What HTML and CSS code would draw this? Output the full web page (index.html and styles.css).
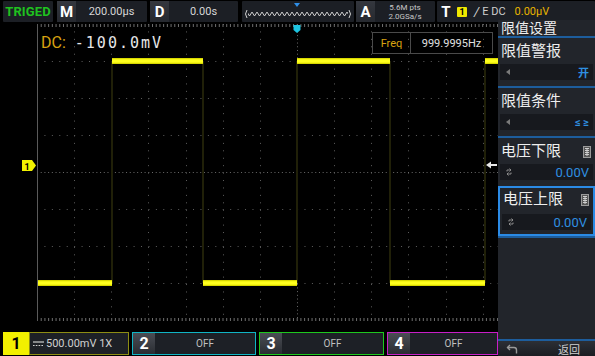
FILE: index.html
```html
<!DOCTYPE html>
<html>
<head>
<meta charset="utf-8">
<link rel="stylesheet" href="styles.css">
</head>
<body>
<div class="screen">
  <header class="topbar">
    <div class="box trig">TRIGED</div>
    <div class="box tb m"><span class="key">M</span><span class="val">200.00µs</span></div>
    <div class="box tb d"><span class="key">D</span><span class="val">0.00s</span></div>
    <div class="box wave">
      <svg width="112" height="21" viewBox="0 0 112 21">
        <defs>
          <pattern id="zz" x="0" y="0" width="5" height="21" patternUnits="userSpaceOnUse">
            <polyline points="0,11 2.5,15 5,11" fill="none" stroke="#cfcfcf" stroke-width="1"/>
          </pattern>
        </defs>
        <rect x="6" y="9" width="100" height="8" fill="url(#zz)"/>
        <path d="M5 9 Q2 13 5 17" fill="none" stroke="#cfcfcf" stroke-width="1"/>
        <path d="M107 9 Q110 13 107 17" fill="none" stroke="#cfcfcf" stroke-width="1"/>
        <polygon points="52,2 58,2 55,6" fill="#2f8fe8"/>
      </svg>
    </div>
    <div class="box acq"><span class="key">A</span><span class="acqtxt"><span>5.6M pts</span><span>2.0GSa/s</span></span></div>
    <div class="box trigset"><span class="key">T</span><span class="chbadge">1</span><span class="slope">/</span><span class="cpl">E DC</span><span class="lvl">0.00µV</span></div>
  </header>
  <div class="main">
    <div class="left">
      <div class="scope">
        <svg class="grid" width="498" height="310" viewBox="0 0 498 310">
          <g stroke="#5e5e5e" stroke-width="1" stroke-dasharray="1 6.43">
            <line x1="37" y1="39.5" x2="498" y2="39.5"/>
            <line x1="37" y1="76.5" x2="498" y2="76.5"/>
            <line x1="37" y1="113.5" x2="498" y2="113.5"/>
            <line x1="37" y1="187.5" x2="498" y2="187.5"/>
            <line x1="37" y1="224.5" x2="498" y2="224.5"/>
            <line x1="37" y1="261.5" x2="498" y2="261.5"/>
            <line x1="74.5" y1="2" x2="74.5" y2="298"/>
            <line x1="111.5" y1="2" x2="111.5" y2="298"/>
            <line x1="148.5" y1="2" x2="148.5" y2="298"/>
            <line x1="186.5" y1="2" x2="186.5" y2="298"/>
            <line x1="223.5" y1="2" x2="223.5" y2="298"/>
            <line x1="260.5" y1="2" x2="260.5" y2="298"/>
            <line x1="334.5" y1="2" x2="334.5" y2="298"/>
            <line x1="371.5" y1="2" x2="371.5" y2="298"/>
            <line x1="408.5" y1="2" x2="408.5" y2="298"/>
            <line x1="446.5" y1="2" x2="446.5" y2="298"/>
            <line x1="483.5" y1="2" x2="483.5" y2="298"/>
          </g>
          <g stroke="#6a6a6a" stroke-width="1" stroke-dasharray="1 2.71">
            <line x1="37" y1="150.5" x2="498" y2="150.5"/>
            <line x1="297.5" y1="2" x2="297.5" y2="298"/>
          </g>
          <g stroke="#6f6f6f" stroke-width="3" stroke-dasharray="1 2.71">
            <line x1="37" y1="3.5" x2="498" y2="3.5"/>
            <line x1="37" y1="297.5" x2="498" y2="297.5"/>
          </g>
          <line x1="37.5" y1="2" x2="37.5" y2="299" stroke="#5a5a5a" stroke-width="1"/>
          <g stroke="#202008" stroke-width="2">
            <line x1="112" y1="39" x2="112" y2="261"/>
            <line x1="203" y1="39" x2="203" y2="261"/>
            <line x1="297" y1="39" x2="297" y2="261"/>
            <line x1="390" y1="39" x2="390" y2="261"/>
            <line x1="485" y1="39" x2="485" y2="261"/>
          </g>
          <g fill="none" stroke="#d8d800" stroke-width="6">
            <line x1="38" y1="261" x2="112" y2="261"/>
            <line x1="203" y1="261" x2="297" y2="261"/>
            <line x1="390" y1="261" x2="485" y2="261"/>
            <line x1="112" y1="39" x2="203" y2="39"/>
            <line x1="297" y1="39" x2="390" y2="39"/>
            <line x1="485" y1="39" x2="498" y2="39"/>
          </g>
          <g fill="none" stroke="#ffff1e" stroke-width="3.5">
            <line x1="38" y1="261" x2="112" y2="261"/>
            <line x1="203" y1="261" x2="297" y2="261"/>
            <line x1="390" y1="261" x2="485" y2="261"/>
            <line x1="112" y1="39" x2="203" y2="39"/>
            <line x1="297" y1="39" x2="390" y2="39"/>
            <line x1="485" y1="39" x2="498" y2="39"/>
          </g>
          <polygon points="22,138 32,138 36,143.5 32,149 22,149" fill="#f2f200"/>
          <text x="27" y="147.5" class="chmark">1</text>
          <polygon points="486,143 491,139.5 491,146.5" fill="#e8e8e8"/>
          <rect x="490" y="142" width="7" height="2" fill="#e8e8e8"/>
          <polygon points="293.5,3 300.5,3 300.5,8 297,11 293.5,8" fill="#1cc4e0"/>
        </svg>
        <div class="readout"><span class="dc">DC:</span><span class="dcval">-100.0mV</span></div>
        <div class="freq"><span class="fl">Freq</span><span class="fv">999.9995Hz</span></div>
      </div>
      <div class="chbar">
        <div class="ch ch1"><span class="ckey">1</span><span class="cbody"><svg width="11" height="6" viewBox="0 0 11 6"><line x1="0" y1="1" x2="11" y2="1" stroke="#cfcfcf" stroke-width="1.2"/><line x1="0" y1="4.5" x2="11" y2="4.5" stroke="#cfcfcf" stroke-width="1.2" stroke-dasharray="1.6 1.2"/></svg>500.00mV 1X</span></div>
        <div class="ch ch2"><span class="ckey">2</span><span class="off">OFF</span></div>
        <div class="ch ch3"><span class="ckey">3</span><span class="off">OFF</span></div>
        <div class="ch ch4"><span class="ckey">4</span><span class="off">OFF</span></div>
      </div>
    </div>
    <aside class="menu">
      <div class="mtitle">限值设置</div>
      <div class="mitem">
        <div class="mlabel">限值警报</div>
        <div class="msub"><span class="larr"></span><span class="mval small">开</span></div>
      </div>
      <div class="mitem">
        <div class="mlabel">限值条件</div>
        <div class="msub"><span class="larr"></span><span class="mval small">≤ ≥</span></div>
      </div>
      <div class="mitem">
        <div class="mlabel"><span>电压下限</span><svg class="kbd" width="8" height="12" viewBox="0 0 8 12"><rect x="0.5" y="0.5" width="7" height="11" fill="#555" stroke="#9a9a9a"/><g stroke="#cfcfcf" stroke-width="1"><line x1="2" y1="2.5" x2="6" y2="2.5"/><line x1="2" y1="4.5" x2="6" y2="4.5"/><line x1="2" y1="6.5" x2="6" y2="6.5"/><line x1="2" y1="8.5" x2="6" y2="8.5"/><line x1="4" y1="2" x2="4" y2="10"/></g></svg></div>
        <div class="msub"><svg class="cyc" width="6" height="8" viewBox="0 0 6 8"><path d="M1 3.5 V2 H5 M3.5 0.5 L5 2 L3.5 3.5" fill="none" stroke="#8a8a8a" stroke-width="1"/><path d="M5 4.5 V6 H1 M2.5 4.5 L1 6 L2.5 7.5" fill="none" stroke="#8a8a8a" stroke-width="1"/></svg><span class="mval">0.00V</span></div>
      </div>
      <div class="mitem sel">
        <div class="mlabel"><span>电压上限</span><svg class="kbd" width="8" height="12" viewBox="0 0 8 12"><rect x="0.5" y="0.5" width="7" height="11" fill="#555" stroke="#9a9a9a"/><g stroke="#cfcfcf" stroke-width="1"><line x1="2" y1="2.5" x2="6" y2="2.5"/><line x1="2" y1="4.5" x2="6" y2="4.5"/><line x1="2" y1="6.5" x2="6" y2="6.5"/><line x1="2" y1="8.5" x2="6" y2="8.5"/><line x1="4" y1="2" x2="4" y2="10"/></g></svg></div>
        <div class="msub"><svg class="cyc" width="6" height="8" viewBox="0 0 6 8"><path d="M1 3.5 V2 H5 M3.5 0.5 L5 2 L3.5 3.5" fill="none" stroke="#8a8a8a" stroke-width="1"/><path d="M5 4.5 V6 H1 M2.5 4.5 L1 6 L2.5 7.5" fill="none" stroke="#8a8a8a" stroke-width="1"/></svg><span class="mval">0.00V</span></div>
      </div>
      <div class="mspacer"></div>
      <div class="mfoot">
        <svg width="12" height="10" viewBox="0 0 12 10"><path d="M1.5 3.5 H8 Q10.5 3.5 10.5 6 V9.5" fill="none" stroke="#9a9a9a" stroke-width="1.4"/><path d="M4 1 L1.5 3.5 L4 6" fill="none" stroke="#9a9a9a" stroke-width="1.4"/></svg>
        <span class="back">返回</span>
      </div>
    </aside>
  </div>
</div>
</body>
</html>
```

FILE: styles.css
```css
* { box-sizing: border-box; margin: 0; padding: 0; }
html, body { width: 595px; height: 356px; background: #000; overflow: hidden; }
body { font-family: Roboto, "Liberation Sans", "Noto Sans CJK SC", sans-serif; color: #d8d8d8; }

.screen { width: 595px; height: 356px; display: flex; flex-direction: column; }

/* top bar */
.topbar { height: 22px; display: flex; padding: 1px 0 0 3px; flex: none; }
.box { height: 21px; background: #1c1f25; display: flex; align-items: center; border-radius: 1px; }
.trig { width: 50px; justify-content: center; color: #1fc21f; font-weight: 700; font-size: 13px; letter-spacing: 0.1px; }
.key { width: 19px; height: 21px; background: linear-gradient(#34373e, #26292f); color: #fff; font-weight: 700; font-size: 15px; display: flex; align-items: center; justify-content: center; flex: none; }
.tb .val { flex: 1; text-align: center; font-size: 11px; color: #d6d6d6; }
.m { width: 90px; margin-left: 4px; }
.d { width: 88px; margin-left: 3px; }
.wave { width: 112px; margin-left: 4px; }
.wave svg { display: block; }
.acq { width: 79px; margin-left: 2px; }
.acqtxt { flex: 1; display: flex; flex-direction: column; align-items: center; font-size: 8px; line-height: 9px; color: #c8c8c8; }
.trigset { flex: 1; margin-left: 2px; background: #1c1f25; }
.trigset .key { width: 18px; background: none; }
.chbadge { width: 10px; height: 10px; background: #f0e800; color: #000; font-size: 9px; font-weight: 700; display: flex; align-items: center; justify-content: center; margin-left: 2px; border-radius: 1px; }
.slope { font-size: 13px; color: #cfcfcf; margin-left: 7px; font-style: italic; }
.cpl { font-size: 11px; color: #cfcfcf; margin-left: 3px; }
.lvl { font-size: 11px; color: #e8b400; margin-left: 9px; }

/* main */
.main { flex: 1; display: flex; }
.left { width: 498px; display: flex; flex-direction: column; }
.scope { height: 310px; position: relative; }
.grid { display: block; }
.chmark { font-family: Roboto, "Liberation Sans", sans-serif; font-size: 9px; font-weight: 700; fill: #000; text-anchor: middle; }
.readout { position: absolute; left: 41px; top: 12px; font-size: 16px; line-height: 18px; display: flex; }
.dc { color: #d8a310; }
.dcval { color: #e6e6e6; margin-left: 9px; letter-spacing: 2px; font-family: "DejaVu Sans Mono", monospace; font-size: 15px; }
.freq { position: absolute; left: 372px; top: 10px; width: 121px; height: 22px; border: 1px solid #4a4a4a; display: flex; align-items: center; font-size: 11px; }
.fl { width: 38px; height: 100%; border-right: 1px solid #4a4a4a; color: #d8a310; display: flex; align-items: center; justify-content: center; }
.fv { flex: 1; text-align: center; color: #e0e0e0; }

/* channel bar */
.chbar { height: 24px; display: flex; padding-left: 3px; }
.ch { height: 23px; display: flex; align-items: stretch; margin-right: 3px; background: #1d2026; }
.ch1 { width: 126px; background: none; }
.ch1 .ckey { width: 26px; background: #f2f000; color: #000; }
.ch1 .cbody { flex: 1; border: 1px solid #8d8d14; background: #1d2026; display: flex; align-items: center; padding-left: 3px; font-size: 11px; color: #d0d0d0; gap: 2px; }
.ckey { width: 22px; background: linear-gradient(#4a4d54, #2a2d33); color: #fff; font-weight: 700; font-size: 16px; display: flex; align-items: center; justify-content: center; }
.ch2 { width: 124px; border: 1px solid #10b4c4; }
.ch3 { width: 125px; border: 1px solid #1ec81e; }
.ch4 { width: 111px; border: 1px solid #c81ec8; margin-right: 0; }
.off { flex: 1; display: flex; align-items: center; justify-content: center; font-size: 10px; color: #c0c0c0; }

/* menu */
.menu { width: 97px; background: #22252b; display: flex; flex-direction: column; margin-top: -2px; }
.mtitle { height: 16px; font-size: 14px; line-height: 16px; padding-left: 3px; color: #eee; }
.mitem { height: 50px; border-top: 2px solid #1d5d9c; padding: 0 2px 0 2px; display: flex; flex-direction: column; }
.mitem.sel { border: 2px solid #2b8be6; margin-top: 0; }
.mitem.sel .mlabel { padding-top: 2px; }
.mlabel { height: 22px; padding-top: 4px; padding-left: 1px; font-size: 15px; line-height: 18px; color: #eee; display: flex; justify-content: space-between; align-items: flex-start; }
.kbd { margin-top: 4px; margin-right: 2px; }
.msub { height: 16px; margin-top: 4px; background: #17191e; display: flex; align-items: center; justify-content: space-between; padding: 0 4px 0 6px; }
.larr { width: 0; height: 0; border-top: 3px solid transparent; border-bottom: 3px solid transparent; border-right: 4px solid #7a7a7a; }
.mval { color: #2f8fe0; font-size: 13px; }
.mval.small { font-size: 11px; font-weight: 700; }
.mspacer { flex: 1; border-top: 2px solid #1d5d9c; }
.mfoot { height: 17px; border-top: 2px solid #1d5d9c; background: linear-gradient(#2c2f35, #1b1d22); display: flex; align-items: center; padding-left: 8px; }
.back { margin-left: 40px; font-size: 11px; color: #d0d0d0; }
```
